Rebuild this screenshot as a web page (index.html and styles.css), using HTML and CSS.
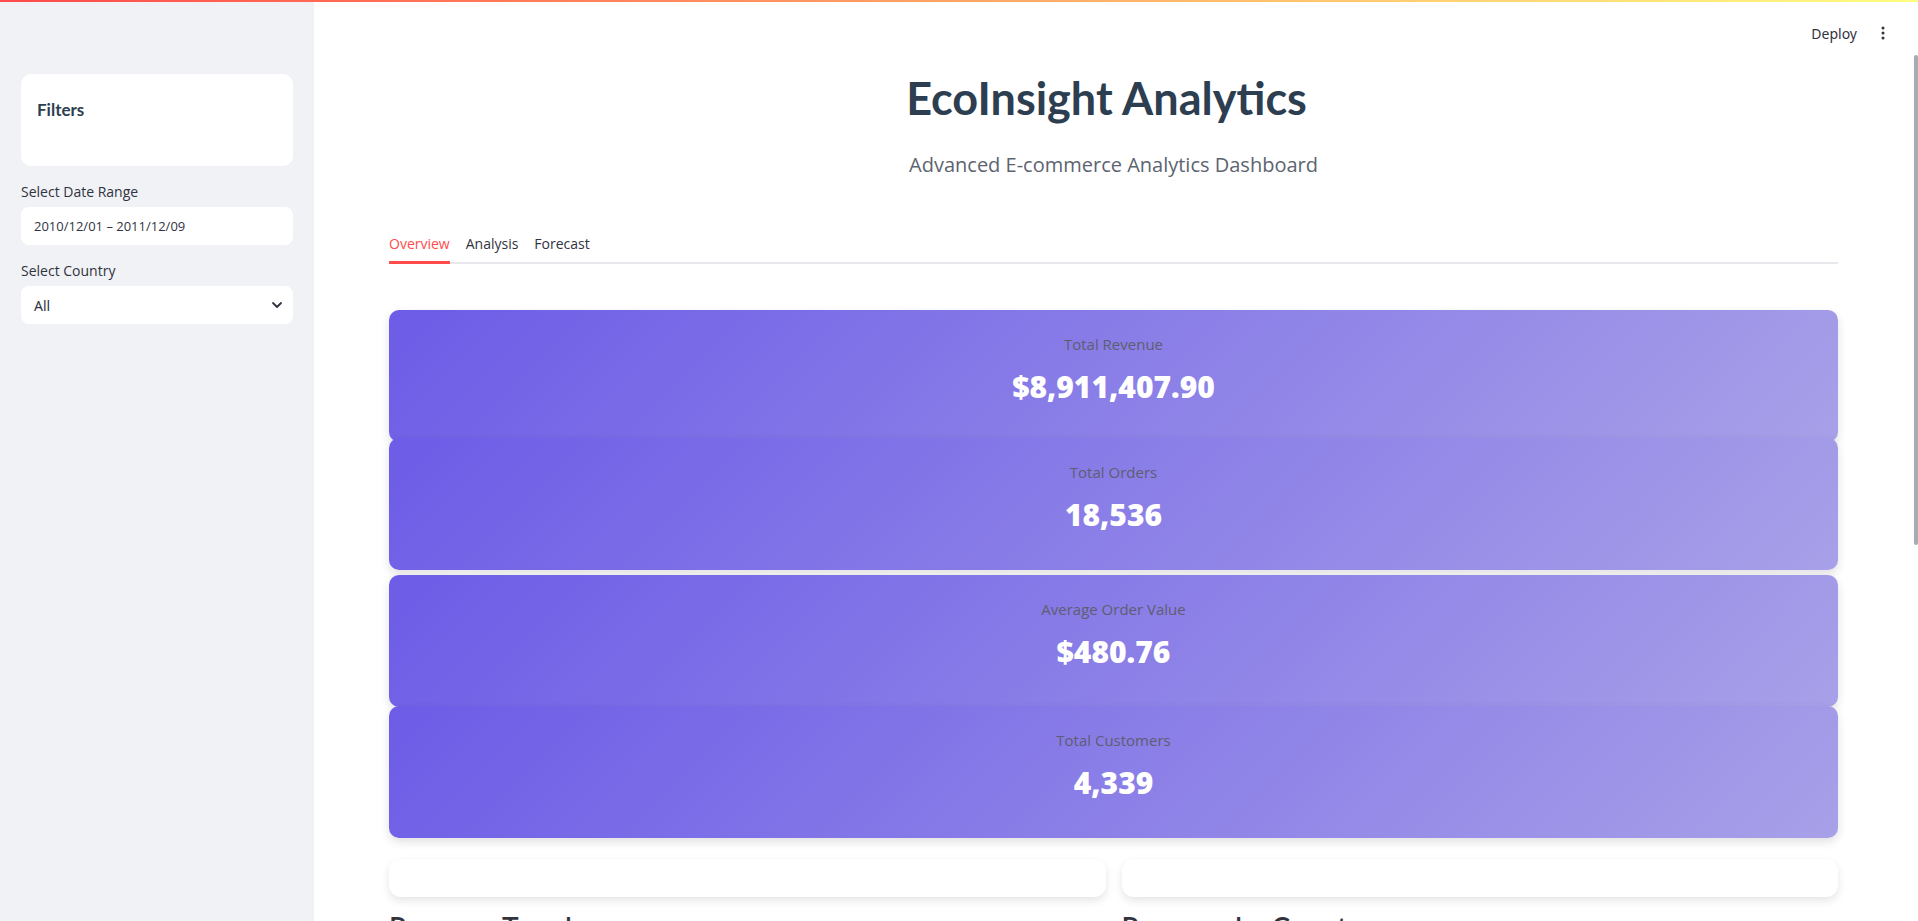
FILE: index.html
```html
<!DOCTYPE html>
<html lang="en">
<head>
    <title>EcoInsight Analytics</title>
    <link rel="stylesheet" href="styles.css">
</head>
<body>

    <!-- Top decoration line -->
    <div class="decoration"></div>

    <!-- Header toolbar -->
    <div class="toolbar">
        <span class="deploy">Deploy</span>
        <svg class="kebab" width="4" height="14" viewBox="0 0 4 14">
            <circle cx="2" cy="2" r="1.5" fill="#31333f"/>
            <circle cx="2" cy="7" r="1.5" fill="#31333f"/>
            <circle cx="2" cy="12" r="1.5" fill="#31333f"/>
        </svg>
    </div>

    <div class="app">

        <!-- Sidebar -->
        <div class="sidebar">
            <div class="filter-box">
                <h3>Filters</h3>
            </div>

            <label class="field-label">Select Date Range</label>
            <div class="field">2010/12/01 – 2011/12/09</div>

            <label class="field-label">Select Country</label>
            <div class="field select">
                <span class="select-value">All</span>
                <svg width="12" height="8" viewBox="0 0 12 8">
                    <path d="M2 2 L6 6 L10 2" fill="none" stroke="#31333f" stroke-width="1.8" stroke-linecap="round" stroke-linejoin="round"/>
                </svg>
            </div>
        </div>

        <!-- Main content -->
        <div class="main">
            <h1 class="title">EcoInsight Analytics</h1>
            <p class="subtitle">Advanced E-commerce Analytics Dashboard</p>

            <div class="tabs">
                <div class="tab active">Overview</div>
                <div class="tab">Analysis</div>
                <div class="tab">Forecast</div>
            </div>

            <div class="metrics">
                <div class="metric">
                    <div class="metric-label">Total Revenue</div>
                    <div class="metric-value">$8,911,407.90</div>
                </div>
                <div class="metric pull">
                    <div class="metric-label">Total Orders</div>
                    <div class="metric-value">18,536</div>
                </div>
                <div class="metric push">
                    <div class="metric-label">Average Order Value</div>
                    <div class="metric-value">$480.76</div>
                </div>
                <div class="metric tight">
                    <div class="metric-label">Total Customers</div>
                    <div class="metric-value">4,339</div>
                </div>
            </div>

            <div class="charts">
                <div class="chart-col">
                    <div class="chart-card"></div>
                    <h2>Revenue Trend</h2>
                </div>
                <div class="chart-col">
                    <div class="chart-card"></div>
                    <h2>Revenue by Country</h2>
                </div>
            </div>

            <div class="scrollbar"></div>
        </div>
    </div>

</body>
</html>
```

FILE: styles.css
```css
body {
    margin: 0;
    font-family: "Open Sans", Arial, sans-serif;
    background-color: #fff;
    color: #31333f;
    overflow: hidden;
    height: 921px;
}

.decoration {
    position: absolute;
    top: 0;
    left: 0;
    right: 0;
    height: 2px;
    background: linear-gradient(90deg, #ff4b4b, #fffd80);
    z-index: 10;
}

.toolbar {
    position: absolute;
    top: 0;
    right: 0;
    height: 66px;
    display: flex;
    align-items: center;
    gap: 24px;
    padding-right: 33px;
    z-index: 5;
}

.deploy {
    font-family: "Noto Sans", sans-serif;
    font-size: 14px;
    color: #31333f;
}

.kebab {
    display: block;
}

.app {
    display: flex;
    height: 921px;
}

/* Sidebar */
.sidebar {
    width: 314px;
    flex-shrink: 0;
    background-color: #f0f2f6;
    padding: 74px 21px 0 21px;
    box-sizing: border-box;
}

.filter-box {
    background-color: #fff;
    border-radius: 10px;
    padding: 24px 16px 44px;
}

.filter-box h3 {
    margin: 0;
    font-family: "Lato", sans-serif;
    font-size: 17px;
    font-weight: 700;
    line-height: 24px;
    color: #2c3e50;
}

.field-label {
    display: block;
    margin-top: 16px;
    margin-bottom: 5px;
    font-size: 14px;
    line-height: 20px;
    color: #31333f;
}

.field {
    height: 38px;
    background-color: #fff;
    border-radius: 8px;
    padding: 0 13px;
    display: flex;
    align-items: center;
    font-size: 13px;
    color: #31333f;
}

.select {
    justify-content: space-between;
    padding-right: 10px;
}

.select-value {
    font-family: "Noto Sans", sans-serif;
    font-size: 14px;
}

/* Main */
.main {
    flex: 1;
    padding: 68px 80px 0 75px;
    position: relative;
}

.title {
    margin: 0;
    padding-right: 14px;
    text-align: center;
    font-family: "Lato", sans-serif;
    font-size: 45px;
    font-weight: 700;
    line-height: 60px;
    color: #2c3e50;
}

.subtitle {
    margin: 23px 0 0;
    text-align: center;
    font-size: 20px;
    line-height: 28px;
    color: #5c6470;
}

.tabs {
    display: flex;
    gap: 16px;
    margin-top: 47px;
    border-bottom: 2px solid #e8e8ec;
}

.tab {
    padding: 8px 0 7px;
    font-size: 14px;
    line-height: 20px;
    color: #31333f;
    border-bottom: 3px solid transparent;
    margin-bottom: -2px;
}

.tab.active {
    color: #ff4b4b;
    border-bottom-color: #ff4b4b;
}

/* Metric cards */
.metrics {
    display: flex;
    flex-direction: column;
    margin-top: 46px;
}

.metric {
    height: 132px;
    box-sizing: border-box;
    padding-top: 22px;
    border-radius: 10px;
    background: linear-gradient(135deg, #6c5ce7, #a8a0e8);
    box-shadow: 0 4px 10px rgba(0, 0, 0, 0.12);
    text-align: center;
}

.metric.pull {
    margin-top: -4px;
}

.metric.push {
    margin-top: 5px;
}

.metric.tight {
    margin-top: -1px;
}

.metric-label {
    font-size: 15px;
    line-height: 24px;
    color: #5f5d70;
}

.metric-value {
    margin-top: 11px;
    font-size: 30px;
    font-weight: 800;
    line-height: 40px;
    color: #fff;
}

/* Chart placeholders */
.charts {
    display: grid;
    grid-template-columns: 1fr 1fr;
    gap: 16px;
    margin-top: 21px;
}

.chart-card {
    height: 38px;
    border-radius: 12px;
    background-color: #fff;
    box-shadow: 0 4px 8px rgba(0, 0, 0, 0.1);
}

.chart-col h2 {
    margin: 12px 0 0;
    font-family: "Lato", sans-serif;
    font-size: 28px;
    font-weight: 600;
    line-height: 36px;
    color: #31333f;
}

.scrollbar {
    position: absolute;
    top: 55px;
    right: 0;
    width: 4px;
    height: 490px;
    border-radius: 2px;
    background-color: #aaaab2;
}
```
